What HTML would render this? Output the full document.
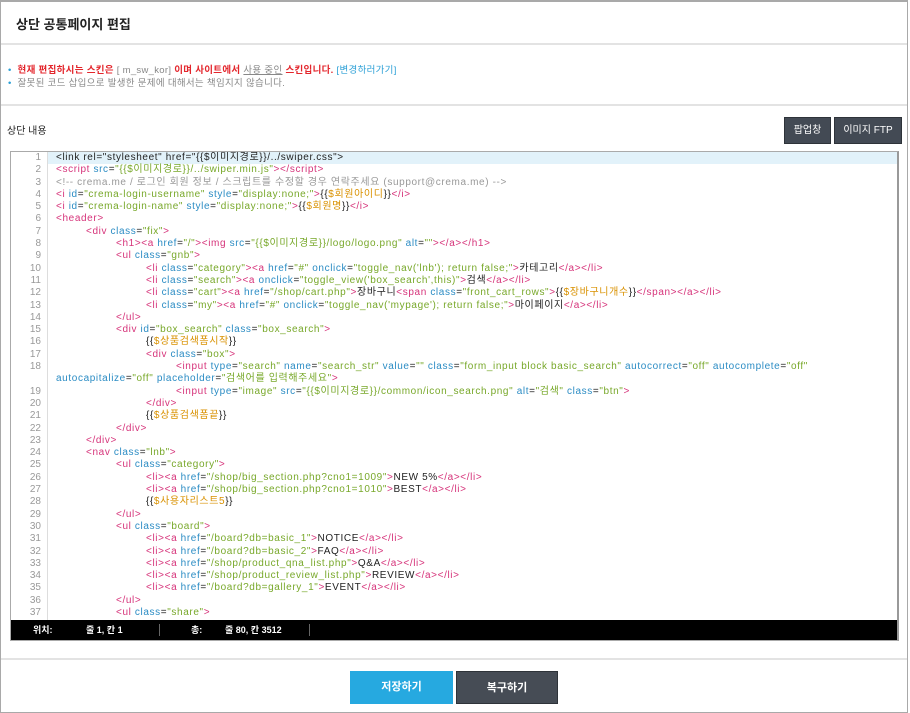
<!DOCTYPE html>
<html><head><meta charset="utf-8"><style>
*{margin:0;padding:0;box-sizing:border-box}
body{width:910px;height:713px;background:#fff;font-family:"Liberation Sans","Noto Sans CJK KR",sans-serif;position:relative;overflow:hidden}
.frame{position:absolute;left:0;top:0;width:908px;height:713px;border:1px solid #a9a9a9;border-top:2px solid #a9a9a9}
.title{position:absolute;left:16px;top:14px;font-size:13px;font-weight:bold;color:#222}
.hr{position:absolute;left:1px;width:906px;height:2px;background:#e3e3e3}
.note{position:absolute;left:8px;font-size:9.5px;color:#888;letter-spacing:0.3px}
.note .b{color:#2a9fd6}
.red{color:#e3262c;font-weight:bold}
.lbl{position:absolute;left:7px;top:122px;font-size:10px;color:#222}
.btn{position:absolute;top:117px;height:27px;background:#434a54;border:1px solid #2e3339;color:#fff;font-size:10px;text-align:center;line-height:25px}
.ed{position:absolute;left:10px;top:151px;width:889px;height:490px;border:1px solid #aaa;border-right:2px solid #999;overflow:hidden;background:#fff}
.gut{position:absolute;left:0;top:0;width:37px;height:470px;border-right:1px solid #ddd;background:#fff}
.gut div,.code div{height:12.3px;line-height:12.3px;font-size:10px;white-space:pre;tab-size:30px;-moz-tab-size:30px}
.gut div{text-align:right;color:#999;width:30px}
.code{position:absolute;left:37px;top:0;width:850px;height:470px;overflow:hidden}
.code div{padding-left:8px;color:#222;letter-spacing:0.62px}
.code div.hl{background:#e2f2fa}
.t{color:#d6337a}.a{color:#2b8cc4}.v{color:#78a82a}.m{color:#d99100}.c{color:#999}
.st{position:absolute;left:0;bottom:0;width:887px;height:20px;background:#000;color:#fff;font-size:9px;line-height:20px;font-weight:bold}
.st span{position:absolute;top:0}
.sep{position:absolute;top:4px;width:1px;height:12px;background:#666}
.bb{position:absolute;top:671px;height:33px;color:#fff;font-size:11px;text-align:center;line-height:33px;font-weight:bold}
</style></head><body>
<div class="frame"></div>
<div class="title">상단 공통페이지 편집</div>
<div class="hr" style="top:43px"></div>
<div class="note" style="top:62px"><span class="b">•</span>&nbsp; <span class="red">현재 편집하시는 스킨은</span> [ m_sw_kor] <span class="red">이며 사이트에서</span> <u>사용 중인</u> <span class="red">스킨입니다.</span> <span class="b">[변경하러가기]</span></div>
<div class="note" style="top:75px"><span class="b">•</span>&nbsp; 잘못된 코드 삽입으로 발생한 문제에 대해서는 책임지지 않습니다.</div>
<div class="hr" style="top:104px"></div>
<div class="lbl">상단 내용</div>
<div class="btn" style="left:784px;width:47px">팝업창</div>
<div class="btn" style="left:834px;width:68px">이미지 FTP</div>
<div class="ed">
<div class="gut"><div>1</div><div>2</div><div>3</div><div>4</div><div>5</div><div>6</div><div>7</div><div>8</div><div>9</div><div>10</div><div>11</div><div>12</div><div>13</div><div>14</div><div>15</div><div>16</div><div>17</div><div>18</div><div></div><div>19</div><div>20</div><div>21</div><div>22</div><div>23</div><div>24</div><div>25</div><div>26</div><div>27</div><div>28</div><div>29</div><div>30</div><div>31</div><div>32</div><div>33</div><div>34</div><div>35</div><div>36</div><div>37</div></div>
<div class="code">
<div class="hl">&lt;link rel="stylesheet" href="{{$이미지경로}}/../swiper.css"&gt;</div>
<div><span class="t">&lt;script</span> <span class="a">src</span>=<span class="v">"{{$이미지경로}}/../swiper.min.js"</span><span class="t">&gt;&lt;/script&gt;</span></div>
<div><span class="c">&lt;!-- crema.me / 로그인 회원 정보 / 스크립트를 수정할 경우 연락주세요 (support@crema.me) --&gt;</span></div>
<div><span class="t">&lt;i</span> <span class="a">id</span>=<span class="v">"crema-login-username"</span> <span class="a">style</span>=<span class="v">"display:none;"</span><span class="t">&gt;</span>{{<span class="m">$회원아이디</span>}}<span class="t">&lt;/i&gt;</span></div>
<div><span class="t">&lt;i</span> <span class="a">id</span>=<span class="v">"crema-login-name"</span> <span class="a">style</span>=<span class="v">"display:none;"</span><span class="t">&gt;</span>{{<span class="m">$회원명</span>}}<span class="t">&lt;/i&gt;</span></div>
<div><span class="t">&lt;header&gt;</span></div>
<div>	<span class="t">&lt;div</span> <span class="a">class</span>=<span class="v">"fix"</span><span class="t">&gt;</span></div>
<div>		<span class="t">&lt;h1&gt;&lt;a</span> <span class="a">href</span>=<span class="v">"/"</span><span class="t">&gt;&lt;img</span> <span class="a">src</span>=<span class="v">"{{$이미지경로}}/logo/logo.png"</span> <span class="a">alt</span>=<span class="v">""</span><span class="t">&gt;&lt;/a&gt;&lt;/h1&gt;</span></div>
<div>		<span class="t">&lt;ul</span> <span class="a">class</span>=<span class="v">"gnb"</span><span class="t">&gt;</span></div>
<div>			<span class="t">&lt;li</span> <span class="a">class</span>=<span class="v">"category"</span><span class="t">&gt;&lt;a</span> <span class="a">href</span>=<span class="v">"#"</span> <span class="a">onclick</span>=<span class="v">"toggle_nav('lnb'); return false;"</span><span class="t">&gt;</span>카테고리<span class="t">&lt;/a&gt;&lt;/li&gt;</span></div>
<div>			<span class="t">&lt;li</span> <span class="a">class</span>=<span class="v">"search"</span><span class="t">&gt;&lt;a</span> <span class="a">onclick</span>=<span class="v">"toggle_view('box_search',this)"</span><span class="t">&gt;</span>검색<span class="t">&lt;/a&gt;&lt;/li&gt;</span></div>
<div>			<span class="t">&lt;li</span> <span class="a">class</span>=<span class="v">"cart"</span><span class="t">&gt;&lt;a</span> <span class="a">href</span>=<span class="v">"/shop/cart.php"</span><span class="t">&gt;</span>장바구니<span class="t">&lt;span</span> <span class="a">class</span>=<span class="v">"front_cart_rows"</span><span class="t">&gt;</span>{{<span class="m">$장바구니개수</span>}}<span class="t">&lt;/span&gt;&lt;/a&gt;&lt;/li&gt;</span></div>
<div>			<span class="t">&lt;li</span> <span class="a">class</span>=<span class="v">"my"</span><span class="t">&gt;&lt;a</span> <span class="a">href</span>=<span class="v">"#"</span> <span class="a">onclick</span>=<span class="v">"toggle_nav('mypage'); return false;"</span><span class="t">&gt;</span>마이페이지<span class="t">&lt;/a&gt;&lt;/li&gt;</span></div>
<div>		<span class="t">&lt;/ul&gt;</span></div>
<div>		<span class="t">&lt;div</span> <span class="a">id</span>=<span class="v">"box_search"</span> <span class="a">class</span>=<span class="v">"box_search"</span><span class="t">&gt;</span></div>
<div>			{{<span class="m">$상품검색폼시작</span>}}</div>
<div>			<span class="t">&lt;div</span> <span class="a">class</span>=<span class="v">"box"</span><span class="t">&gt;</span></div>
<div>				<span class="t">&lt;input</span> <span class="a">type</span>=<span class="v">"search"</span> <span class="a">name</span>=<span class="v">"search_str"</span> <span class="a">value</span>=<span class="v">""</span> <span class="a">class</span>=<span class="v">"form_input block basic_search"</span> <span class="a">autocorrect</span>=<span class="v">"off"</span> <span class="a">autocomplete</span>=<span class="v">"off"</span></div>
<div><span class="a">autocapitalize</span>=<span class="v">"off"</span> <span class="a">placeholder</span>=<span class="v">"검색어를 입력해주세요"</span><span class="t">&gt;</span></div>
<div>				<span class="t">&lt;input</span> <span class="a">type</span>=<span class="v">"image"</span> <span class="a">src</span>=<span class="v">"{{$이미지경로}}/common/icon_search.png"</span> <span class="a">alt</span>=<span class="v">"검색"</span> <span class="a">class</span>=<span class="v">"btn"</span><span class="t">&gt;</span></div>
<div>			<span class="t">&lt;/div&gt;</span></div>
<div>			{{<span class="m">$상품검색폼끝</span>}}</div>
<div>		<span class="t">&lt;/div&gt;</span></div>
<div>	<span class="t">&lt;/div&gt;</span></div>
<div>	<span class="t">&lt;nav</span> <span class="a">class</span>=<span class="v">"lnb"</span><span class="t">&gt;</span></div>
<div>		<span class="t">&lt;ul</span> <span class="a">class</span>=<span class="v">"category"</span><span class="t">&gt;</span></div>
<div>			<span class="t">&lt;li&gt;&lt;a</span> <span class="a">href</span>=<span class="v">"/shop/big_section.php?cno1=1009"</span><span class="t">&gt;</span>NEW 5%<span class="t">&lt;/a&gt;&lt;/li&gt;</span></div>
<div>			<span class="t">&lt;li&gt;&lt;a</span> <span class="a">href</span>=<span class="v">"/shop/big_section.php?cno1=1010"</span><span class="t">&gt;</span>BEST<span class="t">&lt;/a&gt;&lt;/li&gt;</span></div>
<div>			{{<span class="m">$사용자리스트5</span>}}</div>
<div>		<span class="t">&lt;/ul&gt;</span></div>
<div>		<span class="t">&lt;ul</span> <span class="a">class</span>=<span class="v">"board"</span><span class="t">&gt;</span></div>
<div>			<span class="t">&lt;li&gt;&lt;a</span> <span class="a">href</span>=<span class="v">"/board?db=basic_1"</span><span class="t">&gt;</span>NOTICE<span class="t">&lt;/a&gt;&lt;/li&gt;</span></div>
<div>			<span class="t">&lt;li&gt;&lt;a</span> <span class="a">href</span>=<span class="v">"/board?db=basic_2"</span><span class="t">&gt;</span>FAQ<span class="t">&lt;/a&gt;&lt;/li&gt;</span></div>
<div>			<span class="t">&lt;li&gt;&lt;a</span> <span class="a">href</span>=<span class="v">"/shop/product_qna_list.php"</span><span class="t">&gt;</span>Q&amp;A<span class="t">&lt;/a&gt;&lt;/li&gt;</span></div>
<div>			<span class="t">&lt;li&gt;&lt;a</span> <span class="a">href</span>=<span class="v">"/shop/product_review_list.php"</span><span class="t">&gt;</span>REVIEW<span class="t">&lt;/a&gt;&lt;/li&gt;</span></div>
<div>			<span class="t">&lt;li&gt;&lt;a</span> <span class="a">href</span>=<span class="v">"/board?db=gallery_1"</span><span class="t">&gt;</span>EVENT<span class="t">&lt;/a&gt;&lt;/li&gt;</span></div>
<div>		<span class="t">&lt;/ul&gt;</span></div>
<div>		<span class="t">&lt;ul</span> <span class="a">class</span>=<span class="v">"share"</span><span class="t">&gt;</span></div>
</div>
<div class="st"><span style="left:22px">위치:</span><span style="left:75px">줄 1, 칸 1</span><div class="sep" style="left:148px"></div><span style="left:180px">총:</span><span style="left:214px">줄 80, 칸 3512</span><div class="sep" style="left:298px"></div></div>
</div>
<div class="hr" style="top:658px"></div>
<div class="bb" style="left:350px;width:103px;background:#26a9e0">저장하기</div>
<div class="bb" style="left:456px;width:102px;background:#464c55;border:1px solid #2e3339">복구하기</div>
</body></html>
